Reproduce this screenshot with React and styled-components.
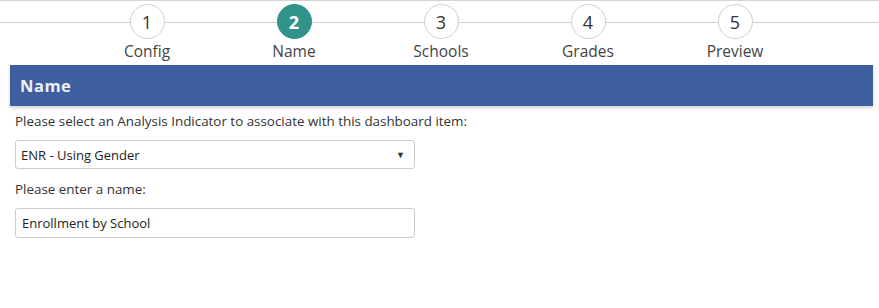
import React from 'react';
import styled, { createGlobalStyle } from 'styled-components';

const GlobalStyle = createGlobalStyle`
  html, body {
    margin: 0;
    padding: 0;
    background: #fff;
    font-family: 'Open Sans', 'Noto Sans', sans-serif;
    color: #333;
  }
`;

const steps = ['Config', 'Name', 'Schools', 'Grades', 'Preview'];
const ACTIVE = 1;

const App = () => (
  <Page>
    <GlobalStyle />
    <Stepper>
      {steps.map((label, i) => (
        <Step key={label}>
          <Circle active={i === ACTIVE}>{i + 1}</Circle>
          <StepLabel>{label}</StepLabel>
        </Step>
      ))}
    </Stepper>
    <Panel>
      <PanelHeader>Name</PanelHeader>
      <PanelBody>
        <FieldLabel>Please select an Analysis Indicator to associate with this dashboard item:</FieldLabel>
        <Select>
          <span>ENR - Using Gender</span>
          <Caret>▼</Caret>
        </Select>
        <FieldLabel>Please enter a name:</FieldLabel>
        <TextInput defaultValue="Enrollment by School" />
      </PanelBody>
    </Panel>
  </Page>
);

export default App;

// styles
const Page = styled.div`
  width: 879px;
  height: 308px;
  border-top: 1px solid #d4d4d4;
  box-sizing: border-box;
`;

const Stepper = styled.div`
  display: flex;
  justify-content: center;
  padding: 3px 0 0 3px;
  height: 64px;
  box-sizing: border-box;
  background: linear-gradient(
    to bottom,
    transparent 21px,
    #cfcfcf 21px,
    #cfcfcf 22px,
    transparent 22px
  );
`;

const Step = styled.div`
  flex: 0 0 147px;
  display: flex;
  flex-direction: column;
  align-items: center;
`;

const Circle = styled.div`
  width: 35px;
  height: 35px;
  box-sizing: border-box;
  border-radius: 50%;
  display: flex;
  align-items: center;
  justify-content: center;
  font-size: 18px;
  font-weight: ${({ active }) => (active ? 700 : 400)};
  background: ${({ active }) => (active ? '#2f9389' : '#fff')};
  color: ${({ active }) => (active ? '#fff' : '#333')};
  border: 1px solid ${({ active }) => (active ? '#2f9389' : '#cfcfcf')};
`;

const StepLabel = styled.div`
  margin-top: 2px;
  font-size: 15.5px;
  line-height: 20px;
  color: #444;
`;

const Panel = styled.div`
  margin: 0 6px 0 10px;
`;

const PanelHeader = styled.div`
  height: 41px;
  background: #3f5f9f;
  color: #eef1f7;
  font-size: 16.5px;
  font-weight: 700;
  letter-spacing: 0.5px;
  display: flex;
  align-items: center;
  padding-left: 10px;
  box-shadow: 0 2px 3px rgba(0, 0, 0, 0.18);
`;

const PanelBody = styled.div`
  padding: 6px 0 0 5px;
  display: flex;
  flex-direction: column;
  align-items: flex-start;
`;

const FieldLabel = styled.div`
  font-size: 13.4px;
  line-height: 18px;
  color: #333;
  margin-bottom: 10px;
`;

const Select = styled.div`
  width: 400px;
  height: 29px;
  box-sizing: border-box;
  border: 1px solid #cccccc;
  border-radius: 3px;
  display: flex;
  align-items: center;
  justify-content: space-between;
  padding: 0 9px 0 5px;
  font-size: 13px;
  color: #222;
  margin-bottom: 11px;
`;

const Caret = styled.span`
  font-size: 9px;
  color: #333;
`;

const TextInput = styled.input`
  width: 400px;
  height: 30px;
  box-sizing: border-box;
  border: 1px solid #cccccc;
  border-radius: 3px;
  padding: 0 6px;
  font-family: 'Open Sans', 'Noto Sans', sans-serif;
  font-size: 13px;
  color: #222;
  outline: none;
`;
